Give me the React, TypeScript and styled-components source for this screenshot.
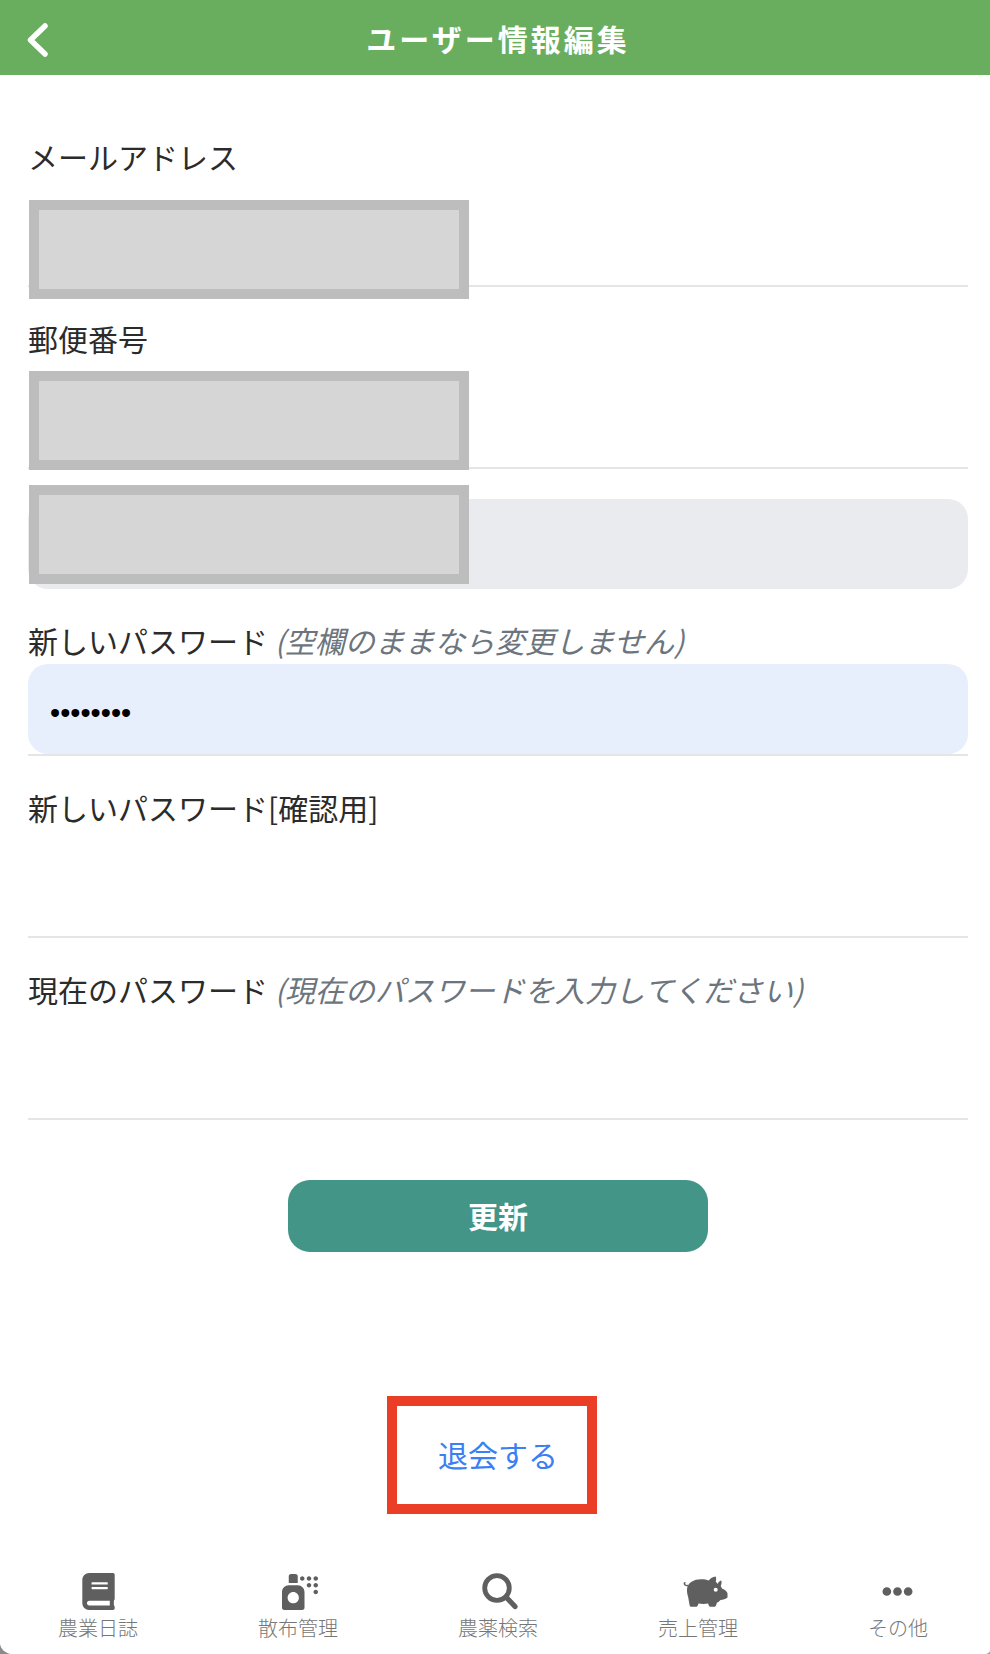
import React from "react";
import styled, { createGlobalStyle } from "styled-components";
import { FaBook, FaSprayCan, FaEllipsisH } from "react-icons/fa";

const GlobalStyle = createGlobalStyle`
  * { box-sizing: border-box; }
  html, body { margin: 0; padding: 0; background: #fff; }
  body { font-family: "Noto Sans CJK JP", "Noto Sans", "Liberation Sans", sans-serif; }
`;

const Page = styled.div`
  position: relative;
  width: 990px;
  height: 1654px;
  overflow: hidden;
  display: flex;
  flex-direction: column;
  background: #fff;
`;

const Header = styled.header`
  height: 75px;
  flex: none;
  background: #69ae5f;
  display: grid;
  grid-template-columns: 1fr auto 1fr;
  align-items: center;
  padding-left: 26px;
  padding-right: 20px;
`;

const BackIcon = styled.svg`
  display: block;
  width: 24px;
  height: 38px;
`;

const Title = styled.h1`
  margin: 0;
  color: #fff;
  font-size: 30px;
  font-weight: 700;
  line-height: 42px;
  letter-spacing: 3px;
`;

const Form = styled.form`
  padding: 30px 22px 0 28px;
  display: flex;
  flex-direction: column;
`;

const Field = styled.div`
  padding-top: 30px;
  border-bottom: 2px solid #e5e5e5;
`;

const Label = styled.label`
  display: block;
  height: 46px;
  line-height: 43px;
  margin-bottom: 14px;
  font-size: 30px;
  color: #2b2b2b;
  white-space: nowrap;
`;

const TightLabel = styled(Label)`
  margin-bottom: -1px;
`;

const Hint = styled.em`
  font-style: italic;
  color: #6c757d;
`;

const Input = styled.input<{ $bg?: string }>`
  display: block;
  width: 100%;
  height: 90px;
  border: 0;
  outline: 0;
  border-radius: 20px;
  padding: 8px 22px 0;
  font-size: 29px;
  color: #000;
  background: ${(p) => p.$bg ?? "transparent"};
  font-family: "Liberation Sans", sans-serif;
`;

const LockedBlock = styled.div`
  padding-top: 30px;
`;

const SubmitButton = styled.button`
  display: block;
  align-self: center;
  width: 420px;
  height: 72px;
  margin-top: 60px;
  padding: 0 0 3px;
  border: 0;
  border-radius: 22px;
  background: #429587;
  color: #fff;
  font-family: inherit;
  font-size: 30px;
  font-weight: 700;
`;

const WithdrawLink = styled.a`
  display: block;
  align-self: center;
  margin-top: 179px;
  height: 46px;
  line-height: 46px;
  font-size: 30px;
  color: #3b7ff5;
  text-decoration: none;
`;

const Nav = styled.nav`
  margin-top: auto;
  margin-left: -2px;
  height: 84px;
  padding-top: 3px;
  display: grid;
  grid-template-columns: repeat(5, 200px);
`;

const NavItem = styled.a`
  display: flex;
  flex-direction: column;
  align-items: center;
  color: #5f5f5f;
`;

const NavIcon = styled.span<{ $shift?: number }>`
  height: 37px;
  margin-bottom: 3px;
  display: flex;
  align-items: center;
  justify-content: center;
  transform: translateX(${(p) => p.$shift ?? 0}px);
  svg { display: block; }
`;

const NavLabel = styled.span`
  font-size: 20px;
  line-height: 30px;
  font-weight: 300;
  color: #767676;
  white-space: nowrap;
`;

const Redaction = styled.div<{ $top: number }>`
  position: absolute;
  left: 29px;
  top: ${(p) => p.$top}px;
  width: 440px;
  height: 99px;
  background: #d6d6d6;
  border: 10px solid #bdbdbd;
`;

const Callout = styled.div`
  position: absolute;
  left: 387px;
  top: 1396px;
  width: 210px;
  height: 118px;
  border: 10px solid #ea3f26;
  pointer-events: none;
`;

const CornerLeft = styled.svg`
  position: absolute;
  left: 0;
  bottom: 0;
  width: 10px;
  height: 10px;
`;

const CornerRight = styled.svg`
  position: absolute;
  right: 0;
  bottom: 0;
  width: 4px;
  height: 4px;
`;

const PiggyIcon = () => (
  <svg width="46" height="31" viewBox="0 0 46 31" fill="#5f5f5f">
    <path d="M5.8 10.2C3.6 10.6 1.8 9.6 1.6 7.6c-.1-1.1.9-2 1.7-1.5.6.4.1 1-.1 1.5-.2 1 1 1.5 2.5 1.2.4-.1.6.9.1 1.4z" />
    <path d="M5 13C5.6 6.5 12 3.2 19 3.2c3.2 0 5.6.5 7.8 1.3C28.2 2.2 31 .8 33.6.4c.7 1 .7 3.4.1 5.4.9.8 1.4 1.4 2 2.2.5-1.4 1.6-2.8 3.4-3.4.8.9.7 3-.4 5.4.6 1 .9 1.6 1.2 2.6 2.3.8 4.6 2.5 5.6 4.6v4.2c-1.6 1.6-4.7 2.3-7 2.7-1.2 1.3-2.4 2.2-3.6 2.7l-.9 2.6c-.3.9-.9 1.3-1.8 1.3h-3.7c-1 0-1.6-.7-1.9-1.6l-.5-1.6c-2.8.5-6.5.5-9.6 0l-.6 1.7c-.3.9-.9 1.5-1.9 1.5H9.5c-1 0-1.6-.5-1.9-1.5L6.2 21.3C5.4 18.7 4.8 15.8 5 13z" />
    <circle cx="33.7" cy="13.8" r="2" fill="#fff" />
  </svg>
);

const SearchIcon = () => (
  <svg width="36" height="37" viewBox="0 0 36 37" fill="none" stroke="#5f5f5f" strokeLinecap="round">
    <circle cx="15" cy="15" r="12.3" strokeWidth="4.8" />
    <path d="M24.5 24.5 33 33.5" strokeWidth="5.2" />
  </svg>
);

const navItems = [
  { label: "農業日誌", icon: <FaBook size={37} /> },
  { label: "散布管理", icon: <FaSprayCan size={36} />, shift: 2 },
  { label: "農薬検索", icon: <SearchIcon />, shift: 2 },
  { label: "売上管理", icon: <PiggyIcon />, shift: 7 },
  { label: "その他", icon: <FaEllipsisH size={31} />, shift: -1 },
];

export default function App() {
  return (
    <>
      <GlobalStyle />
      <Page>
        <Header>
          <BackIcon viewBox="0 0 24 38" fill="none" stroke="#fff" strokeWidth="5.5" strokeLinecap="round" strokeLinejoin="round">
            <path d="M19 7 4.5 21 19 35" />
          </BackIcon>
          <Title>ユーザー情報編集</Title>
        </Header>

        <Form>
          <Field>
            <Label>メールアドレス</Label>
            <Input readOnly />
          </Field>
          <Field>
            <Label>郵便番号</Label>
            <Input readOnly />
          </Field>
          <LockedBlock>
            <Input readOnly $bg="#e9ebef" />
          </LockedBlock>
          <Field>
            <TightLabel>
              新しいパスワード <Hint>(空欄のままなら変更しません)</Hint>
            </TightLabel>
            <Input type="password" readOnly value="password" $bg="#e8effc" />
          </Field>
          <Field>
            <Label>新しいパスワード[確認用]</Label>
            <Input type="password" readOnly />
          </Field>
          <Field>
            <Label>
              現在のパスワード <Hint>(現在のパスワードを入力してください)</Hint>
            </Label>
            <Input type="password" readOnly />
          </Field>
          <SubmitButton type="button">更新</SubmitButton>
          <WithdrawLink>退会する</WithdrawLink>
        </Form>

        <Nav>
          {navItems.map((item) => (
            <NavItem key={item.label}>
              <NavIcon $shift={item.shift}>{item.icon}</NavIcon>
              <NavLabel>{item.label}</NavLabel>
            </NavItem>
          ))}
        </Nav>

        <Redaction $top={200} />
        <Redaction $top={371} />
        <Redaction $top={485} />
        <Callout />
        <CornerLeft viewBox="0 0 10 10"><path d="M0 0C1 5 4 8 10 10H0z" fill="#8a8a8a" /></CornerLeft>
        <CornerRight viewBox="0 0 4 4"><path d="M4 0C4 2 3 3 0 4h4z" fill="#a0a0a0" /></CornerRight>
      </Page>
    </>
  );
}
